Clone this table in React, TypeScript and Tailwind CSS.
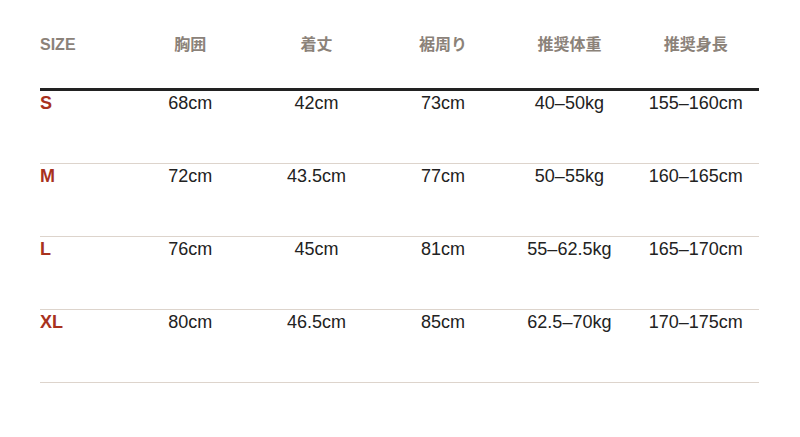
const headers = ["胸囲", "着丈", "裾周り", "推奨体重", "推奨身長"]

const rows = [
  { size: "S", values: ["68cm", "42cm", "73cm", "40–50kg", "155–160cm"] },
  { size: "M", values: ["72cm", "43.5cm", "77cm", "50–55kg", "160–165cm"] },
  { size: "L", values: ["76cm", "45cm", "81cm", "55–62.5kg", "165–170cm"] },
  { size: "XL", values: ["80cm", "46.5cm", "85cm", "62.5–70kg", "170–175cm"] },
]

export default function App() {
  return (
    <div className="min-h-[437px] bg-white px-10 pt-[33px] font-['Liberation_Sans','Noto_Sans_CJK_JP',sans-serif]">
      <div className="grid w-[719px] grid-cols-[87px_repeat(5,1fr)]">
        <div className="h-[58px] border-b-[3px] border-[#222] pt-[2px] text-left text-[16px] leading-5 font-bold text-[#8b8279]">
          SIZE
        </div>
        {headers.map((h) => (
          <div
            key={h}
            className="h-[58px] border-b-[3px] border-[#222] text-center font-['Noto_Sans_CJK_JP',sans-serif] text-[16px] leading-5 font-bold text-[#8b8279]"
          >
            {h}
          </div>
        ))}
        {rows.map((r) => (
          <div key={r.size} className="contents">
            <div className="h-[73px] border-b border-[#ddd4cc] pt-px text-left text-[18px] leading-[22px] font-bold text-[#a8321e]">
              {r.size}
            </div>
            {r.values.map((v, i) => (
              <div
                key={i}
                className="h-[73px] border-b border-[#ddd4cc] pt-px text-center text-[18px] leading-[22px] text-[#222]"
              >
                {v}
              </div>
            ))}
          </div>
        ))}
      </div>
    </div>
  )
}
